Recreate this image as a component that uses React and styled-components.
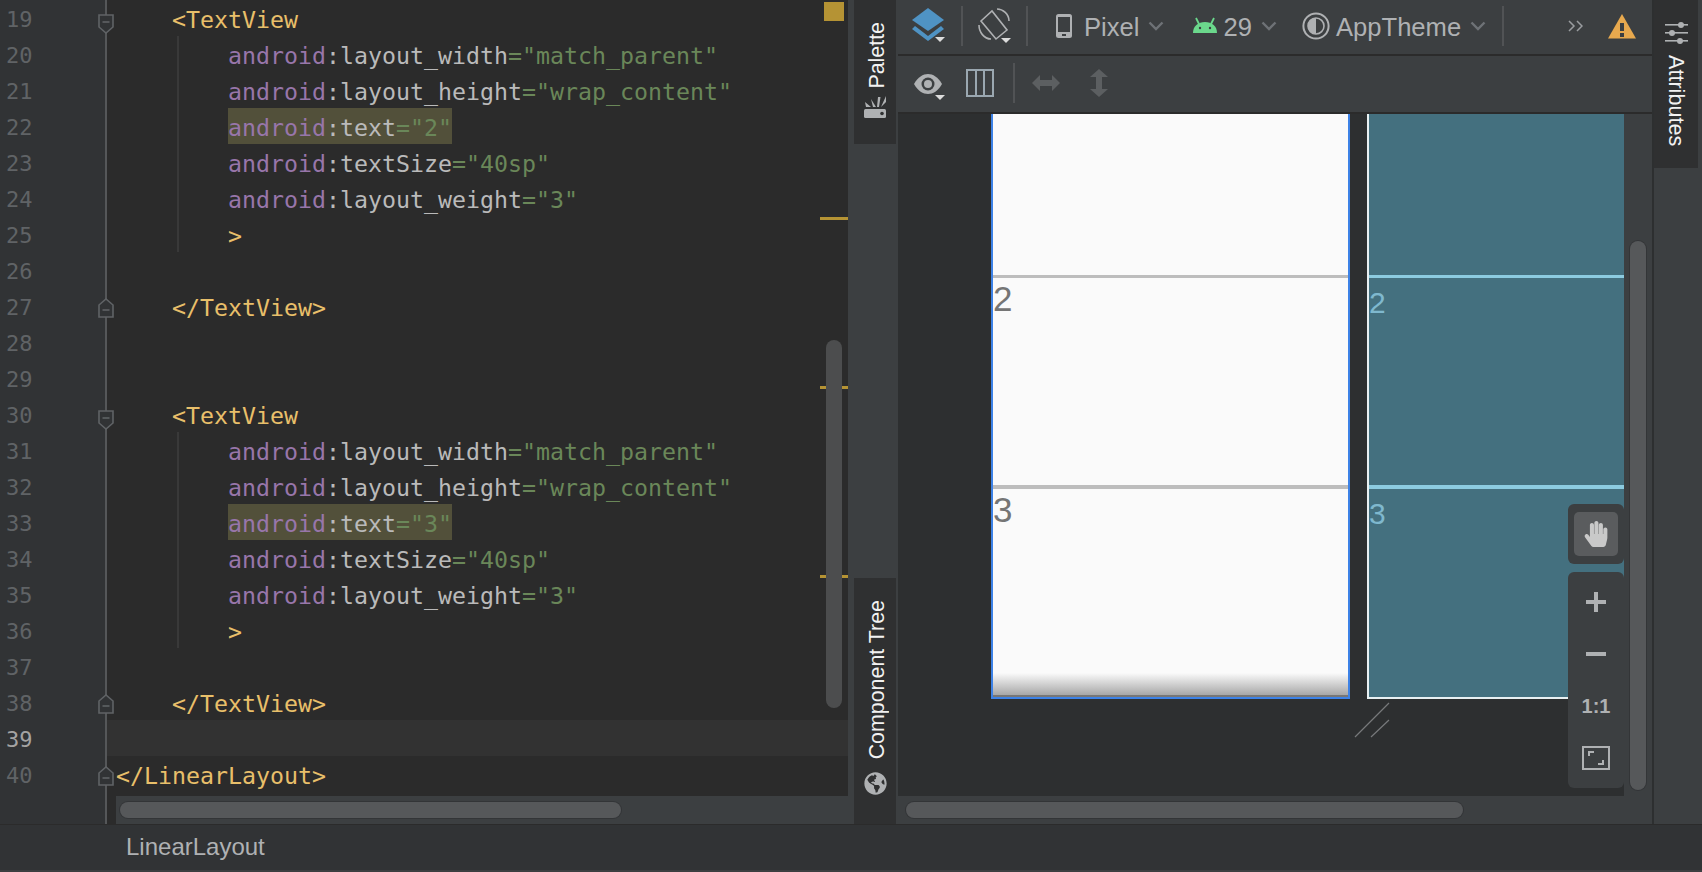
import React from 'react';
import styled, { createGlobalStyle } from 'styled-components';
import { FaGlobeAmericas, FaHandPaper } from 'react-icons/fa';

const GlobalStyle = createGlobalStyle`
  html, body { margin: 0; padding: 0; background: #3c3f41; overflow: hidden; }
  * { box-sizing: border-box; }
`;

const attrLine = (name, value) => ({ ns: 'android', name, value });

const blockLines = (start, digit) => [
  { n: start, indent: 1, tag: '<TextView', fold: 'open' },
  { n: start + 1, guide: true, ...attrLine('layout_width', 'match_parent') },
  { n: start + 2, guide: true, ...attrLine('layout_height', 'wrap_content') },
  { n: start + 3, guide: true, mark: true, ...attrLine('text', digit) },
  { n: start + 4, guide: true, ...attrLine('textSize', '40sp') },
  { n: start + 5, guide: true, ...attrLine('layout_weight', '3') },
  { n: start + 6, guide: true, indent: 2, tag: '>' },
  { n: start + 7 },
  { n: start + 8, indent: 1, tag: '</TextView>', fold: 'close' },
];

const lines = [
  ...blockLines(19, '2'),
  { n: 28 },
  { n: 29 },
  ...blockLines(30, '3'),
  { n: 39, current: true },
  { n: 40, indent: 0, tag: '</LinearLayout>', fold: 'close' },
];

const stripes = [217, 386, 575];

const FoldIcon = ({ kind }) => (
  <FoldMarker $kind={kind} width="16" height="20" viewBox="0 0 16 20">
    <path
      d={kind === 'open' ? 'M1 1H15V13L8 19L1 13Z' : 'M1 19H15V7L8 1L1 7Z'}
      fill="#313335"
      stroke="#606366"
      strokeWidth="1.6"
    />
    <path d={kind === 'open' ? 'M4.5 8H11.5' : 'M4.5 12H11.5'} stroke="#606366" strokeWidth="1.6" />
  </FoldMarker>
);

const Chevron = () => (
  <ChevronBox width="16" height="10" viewBox="0 0 16 10">
    <path d="M1.5 1.5L8 8L14.5 1.5" fill="none" stroke="#6e7276" strokeWidth="2.4" />
  </ChevronBox>
);

const LayersIcon = () => (
  <svg width="38" height="36" viewBox="0 0 38 36">
    <path d="M16 0L32 12L16 23L0 12Z" fill="#4f93c4" />
    <path d="M3 18L16 28L29 18L32 21L16 33L0 21Z" fill="#4f93c4" />
    <path d="M23 29H33L28 34Z" fill="#dcdcdc" />
  </svg>
);

const RotateIcon = () => (
  <svg width="36" height="36" viewBox="0 0 36 36" fill="none" stroke="#afb1b3" strokeWidth="1.6">
    <path d="M3 13L14 3L29 22L18 31Z" />
    <path d="M19 1C25 1 31 6 31 13" />
    <path d="M1 17C1 24 6 31 13 31" />
    <path d="M23 30H33L28 35Z" fill="#dcdcdc" stroke="none" />
  </svg>
);

const PhoneIcon = () => (
  <svg width="16" height="24" viewBox="0 0 16 24">
    <rect width="16" height="24" rx="2.5" fill="#afb1b3" />
    <rect x="2" y="3" width="12" height="15" fill="#3c3f41" />
    <rect x="6" y="20" width="4" height="2" fill="#3c3f41" />
  </svg>
);

const AndroidIcon = () => (
  <svg width="24" height="18" viewBox="0 0 24 18">
    <path d="M0 16C0 9 5 5 12 5C19 5 24 9 24 16Z" fill="#6bd88c" />
    <path d="M6 7L3 1M18 7L21 1" stroke="#6bd88c" strokeWidth="1.8" />
    <circle cx="7" cy="11" r="1.2" fill="#3c3f41" />
    <circle cx="17" cy="11" r="1.2" fill="#3c3f41" />
  </svg>
);

const ThemeIcon = () => (
  <svg width="28" height="28" viewBox="0 0 28 28">
    <circle cx="14" cy="14" r="12.6" fill="none" stroke="#afb1b3" strokeWidth="2" />
    <circle cx="14" cy="14" r="8" fill="none" stroke="#afb1b3" strokeWidth="1.6" />
    <path d="M14 6A8 8 0 0 0 14 22Z" fill="#afb1b3" />
  </svg>
);

const OverflowIcon = () => (
  <svg width="15" height="12" viewBox="0 0 15 12" fill="none" stroke="#9a9da0" strokeWidth="1.5">
    <path d="M1 1L6 6L1 11M9 1L14 6L9 11" />
  </svg>
);

const WarningIcon = () => (
  <svg width="28" height="25" viewBox="0 0 28 25">
    <path d="M14 0L28 24.5H0Z" fill="#e8a94e" />
    <rect x="12" y="9" width="4" height="8" fill="#3c3f41" />
    <rect x="12" y="19" width="4" height="4" fill="#3c3f41" />
  </svg>
);

const EyeIcon = () => (
  <svg width="32" height="34" viewBox="0 -5 32 34">
    <path d="M0 13C4 6 9 3 14 3C19 3 24 6 28 13C24 20 19 23 14 23C9 23 4 20 0 13Z" fill="#afb1b3" />
    <circle cx="14" cy="13" r="6.5" fill="#3c3f41" />
    <circle cx="14" cy="13" r="4" fill="#afb1b3" />
    <path d="M21 24H31L26 29Z" fill="#dcdcdc" />
  </svg>
);

const ColumnsIcon = () => (
  <svg width="28" height="28" viewBox="0 0 28 28" fill="none" stroke="#9aa7b0" strokeWidth="2">
    <rect x="1" y="1" width="26" height="26" />
    <path d="M10 1V27M18 1V27" />
  </svg>
);

const HorizontalArrows = () => (
  <svg width="28" height="16" viewBox="0 0 28 16">
    <path d="M0 8L8 0V5H20V0L28 8L20 16V11H8V16Z" fill="#5c5f61" />
  </svg>
);

const VerticalArrows = () => (
  <svg width="18" height="28" viewBox="0 0 18 28">
    <path d="M9 0L18 8H12V20H18L9 28L0 20H6V8H0Z" fill="#5c5f61" />
  </svg>
);

const PaletteIcon = () => (
  <svg width="22" height="22" viewBox="0 0 22 22">
    <rect y="13" width="22" height="9" rx="1.5" fill="#afb1b3" />
    <circle cx="18" cy="17.5" r="1.8" fill="#2f3031" />
    <path d="M1 6L7 11H2ZM7 3L12 11H9ZM14 1H16.5L15 11H13ZM22 0V6L17 11Z" fill="#afb1b3" />
  </svg>
);

const SlidersIcon = () => (
  <svg width="23" height="22" viewBox="0 0 23 22" fill="#afb1b3">
    <rect y="2" width="23" height="1.6" />
    <rect y="10" width="23" height="1.6" />
    <rect y="18" width="23" height="1.6" />
    <circle cx="16" cy="3" r="3" />
    <circle cx="7" cy="11" r="3" />
    <circle cx="15" cy="19" r="3" />
  </svg>
);

const ResizeHandle = () => (
  <HandleSvg width="36" height="36" viewBox="0 0 36 36" fill="none" stroke="#77797b" strokeWidth="1.2">
    <path d="M1 35L35 1M17 35L35 18" />
  </HandleSvg>
);

const FitIcon = () => (
  <svg width="28" height="24" viewBox="0 0 28 24" fill="none" stroke="#afb1b3">
    <rect x="1" y="1" width="26" height="22" strokeWidth="2" />
    <path d="M7 10V6H12M21 14V18H16" strokeWidth="2" />
  </svg>
);

const CodeLine = ({ line }) => (
  <Row $current={line.current} $guide={line.guide}>
    {line.tag && <Tag $indent={line.indent}>{line.tag}</Tag>}
    {line.ns && (
      <Attribute $mark={line.mark}>
        <Ns>{line.ns}</Ns>:{line.name}<Val>="{line.value}"</Val>
      </Attribute>
    )}
  </Row>
);

const ScreenPreview = () => (
  <Screen>
    <Cell $height={161} />
    <Cell $height={210} $thick={3}><Digit>2</Digit></Cell>
    <Cell $height={212} $thick={4}><Digit>3</Digit></Cell>
    <Shade />
  </Screen>
);

const BlueprintPreview = () => (
  <Blueprint>
    <BlueCell $height={161} />
    <BlueCell $height={210} $thick={3}><BlueDigit>2</BlueDigit></BlueCell>
    <BlueCell $height={212} $thick={4}><BlueDigit>3</BlueDigit></BlueCell>
  </Blueprint>
);

export default function App() {
  return (
    <>
      <GlobalStyle />
      <Page>
        <Workspace>
          <Editor>
            <Gutter>
              {lines.map((l) => (
                <GutterRow key={l.n}>
                  <LineNumber $current={l.current}>{l.n}</LineNumber>
                  {l.fold && <FoldIcon kind={l.fold} />}
                </GutterRow>
              ))}
            </Gutter>
            <CodePane>
              <CodeArea>
                {lines.map((l) => <CodeLine key={l.n} line={l} />)}
                <ErrorSquare />
                {stripes.map((y) => <Stripe key={y} style={{ top: y }} />)}
                <EditorThumb />
              </CodeArea>
              <EditorTrack><ScrollThumb $width={501} /></EditorTrack>
            </CodePane>
          </Editor>

          <SideStrip>
            <SideTab $height={144} $gap={7}>
              <RotatedLabel>Palette</RotatedLabel>
              <PaletteIcon />
            </SideTab>
            <SideTab $height={246} $gap={13}>
              <RotatedLabel>Component Tree</RotatedLabel>
              <FaGlobeAmericas size={23} color="#afb1b3" />
            </SideTab>
          </SideStrip>

          <Designer>
            <Toolbar $height={56}>
              <ToolSlot $ml={14}><LayersIcon /></ToolSlot>
              <Divider $ml={11} />
              <ToolSlot $ml={15}><RotateIcon /></ToolSlot>
              <Divider $ml={12} />
              <ToolSlot $ml={28}><PhoneIcon /></ToolSlot>
              <ToolText $ml={12}>Pixel</ToolText>
              <Chevron />
              <ToolSlot $ml={29}><AndroidIcon /></ToolSlot>
              <ToolText $ml={6}>29</ToolText>
              <Chevron />
              <ToolSlot $ml={25}><ThemeIcon /></ToolSlot>
              <ToolText $ml={6}>AppTheme</ToolText>
              <Chevron />
              <Divider $ml={16} />
              <ToolSlot $ml={64}><OverflowIcon /></ToolSlot>
              <ToolSlot $ml={25}><WarningIcon /></ToolSlot>
            </Toolbar>
            <Toolbar $height={58}>
              <ToolSlot $ml={16}><EyeIcon /></ToolSlot>
              <ToolSlot $ml={20}><ColumnsIcon /></ToolSlot>
              <Divider $ml={19} />
              <ToolSlot $ml={17}><HorizontalArrows /></ToolSlot>
              <ToolSlot $ml={30}><VerticalArrows /></ToolSlot>
            </Toolbar>
            <DesignBody>
              <Surface>
                <ScreenPreview />
                <BlueprintPreview />
                <ResizeHandle />
                <HandPanel>
                  <HandButton><FaHandPaper size={26} color="#c9c9c9" /></HandButton>
                </HandPanel>
                <ZoomPanel>
                  <ZoomSign>
                    <svg width="20" height="20" viewBox="0 0 20 20"><path d="M8 0H12V8H20V12H12V20H8V12H0V8H8Z" fill="#afb1b3" /></svg>
                  </ZoomSign>
                  <ZoomSign>
                    <svg width="20" height="4" viewBox="0 0 20 4"><rect width="20" height="4" fill="#afb1b3" /></svg>
                  </ZoomSign>
                  <ZoomSign><ActualSize>1:1</ActualSize></ZoomSign>
                  <ZoomSign><FitIcon /></ZoomSign>
                </ZoomPanel>
              </Surface>
              <SurfaceTrack><VerticalThumb /></SurfaceTrack>
            </DesignBody>
            <SurfaceBottomTrack><ScrollThumb $width={557} /></SurfaceBottomTrack>
          </Designer>

          <RightStrip>
            <AttributesTab>
              <SlidersIcon />
              <UprightLabel>Attributes</UprightLabel>
            </AttributesTab>
          </RightStrip>
        </Workspace>
        <StatusBar>LinearLayout</StatusBar>
      </Page>
    </>
  );
}

const Page = styled.div`
  width: 1702px;
  height: 872px;
  display: flex;
  flex-direction: column;
  overflow: hidden;
  font-family: "Liberation Sans", Arial, sans-serif;
`;

const Workspace = styled.div`
  display: flex;
  height: 824px;
`;

const Editor = styled.div`
  display: flex;
  width: 848px;
  background: #2b2b2b;
`;

const Gutter = styled.div`
  width: 107px;
  background: #313335;
  border-right: 2px solid #555759;
`;

const GutterRow = styled.div`
  position: relative;
  height: 36px;
`;

const LineNumber = styled.span`
  display: block;
  padding-left: 6px;
  font: 22px/40px "DejaVu Sans Mono", monospace;
  color: ${(p) => (p.$current ? '#a4a3a3' : '#606366')};
`;

const FoldMarker = styled.svg`
  position: absolute;
  left: 98px;
  top: ${(p) => (p.$kind === 'open' ? '14px' : '10px')};
`;

const CodePane = styled.div`
  flex: 1;
  display: flex;
  flex-direction: column;
  min-width: 0;
`;

const CodeArea = styled.div`
  position: relative;
  flex: 1;
  overflow: hidden;
`;

const Row = styled.div`
  position: relative;
  height: 36px;
  padding-left: 9px;
  white-space: pre;
  font: 23.25px/40px "DejaVu Sans Mono", monospace;
  color: #bababa;
  background: ${(p) => (p.$current ? '#323232' : 'transparent')};
  ${(p) => p.$guide && `
    &::before {
      content: '';
      position: absolute;
      left: 70px;
      top: 0;
      bottom: 0;
      width: 2px;
      background: #393939;
    }
  `}
`;

const Tag = styled.span`
  color: #e8bf6a;
  margin-left: ${(p) => p.$indent * 56}px;
`;

const Attribute = styled.span`
  display: inline-block;
  height: 36px;
  margin-left: 112px;
  background: ${(p) => (p.$mark ? '#52503a' : 'transparent')};
`;

const Ns = styled.span`
  color: #9876aa;
`;

const Val = styled.span`
  color: #6a8759;
`;

const ErrorSquare = styled.div`
  position: absolute;
  left: 717px;
  top: 2px;
  width: 20px;
  height: 19px;
  background: #b59334;
`;

const Stripe = styled.div`
  position: absolute;
  left: 713px;
  width: 28px;
  height: 3px;
  background: #b59334;
`;

const EditorThumb = styled.div`
  position: absolute;
  left: 719px;
  top: 340px;
  width: 16px;
  height: 368px;
  border-radius: 8px;
  background: #4c4d4e;
`;

const EditorTrack = styled.div`
  height: 28px;
  margin-left: 9px;
  padding: 6px 4px;
  background: #3c3f41;
`;

const ScrollThumb = styled.div`
  width: ${(p) => p.$width}px;
  height: 16px;
  border-radius: 8px;
  background: #56585a;
  box-shadow: 0 0 0 1px #333537;
`;

const SideStrip = styled.div`
  width: 50px;
  padding: 0 2px 0 6px;
  display: flex;
  flex-direction: column;
  justify-content: space-between;
  background: #3c3f41;
`;

const SideTab = styled.div`
  height: ${(p) => p.$height}px;
  padding-top: 22px;
  display: flex;
  flex-direction: column;
  align-items: center;
  gap: ${(p) => p.$gap}px;
  background: #2f3031;
`;

const RotatedLabel = styled.span`
  position: relative;
  left: 2px;
  writing-mode: vertical-rl;
  transform: rotate(180deg);
  font-size: 21.4px;
  line-height: 22px;
  color: #f2f2f2;
`;

const Designer = styled.div`
  width: 754px;
  display: flex;
  flex-direction: column;
`;

const Toolbar = styled.div`
  height: ${(p) => p.$height}px;
  padding-bottom: 2px;
  display: flex;
  align-items: center;
  background: #3c3f41;
  border-bottom: 2px solid #2b2b2b;
`;

const ToolSlot = styled.div`
  display: flex;
  margin-left: ${(p) => p.$ml}px;
`;

const Divider = styled.div`
  width: 2px;
  height: 40px;
  margin-left: ${(p) => p.$ml}px;
  background: #515355;
`;

const ToolText = styled.span`
  margin-left: ${(p) => p.$ml}px;
  padding-top: 2px;
  font-size: 25.6px;
  color: #afb1b3;
`;

const ChevronBox = styled.svg`
  margin-left: 9px;
`;

const DesignBody = styled.div`
  display: flex;
  height: 682px;
`;

const Surface = styled.div`
  position: relative;
  width: 726px;
  padding-left: 93px;
  display: flex;
  gap: 17px;
  overflow: hidden;
  background: #2d2f30;
`;

const Screen = styled.div`
  position: relative;
  flex: none;
  width: 359px;
  height: 585px;
  overflow: hidden;
  background: #fafafa;
  border: solid #3d82e6;
  border-width: 0 2px 2px 2px;
`;

const Cell = styled.div`
  height: ${(p) => p.$height}px;
  border-top: ${(p) => p.$thick || 0}px solid #bdbdbd;
`;

const Digit = styled.div`
  padding-top: 1px;
  font-size: 35px;
  line-height: 40px;
  color: #757575;
`;

const Shade = styled.div`
  position: absolute;
  left: 0;
  right: 0;
  bottom: 0;
  height: 24px;
  background: linear-gradient(#fafafa, #a9a9a9 90%, #777 90%);
`;

const Blueprint = styled.div`
  flex: none;
  width: 359px;
  height: 585px;
  background: #44707f;
  border: solid #e8f0f2;
  border-width: 0 2px 2px 2px;
`;

const BlueCell = styled.div`
  height: ${(p) => p.$height}px;
  border-top: ${(p) => p.$thick || 0}px solid #8ccbe0;
`;

const BlueDigit = styled.div`
  padding-top: 8px;
  font-size: 30px;
  line-height: 34px;
  color: #7fb8ce;
`;

const HandleSvg = styled.svg`
  position: absolute;
  left: 456px;
  top: 588px;
`;

const HandPanel = styled.div`
  position: absolute;
  right: 0;
  top: 390px;
  width: 56px;
  height: 60px;
  padding: 8px 6px;
  border-radius: 6px;
  background: #3c3f41;
`;

const HandButton = styled.div`
  width: 44px;
  height: 44px;
  display: flex;
  align-items: center;
  justify-content: center;
  border-radius: 5px;
  background: #5a5c5e;
`;

const ZoomPanel = styled.div`
  position: absolute;
  right: 0;
  top: 458px;
  width: 56px;
  height: 216px;
  padding: 4px 0;
  display: flex;
  flex-direction: column;
  border-radius: 6px;
  background: #3c3f41;
`;

const ZoomSign = styled.div`
  flex: 1;
  display: flex;
  align-items: center;
  justify-content: center;
`;

const ActualSize = styled.span`
  font-size: 20px;
  font-weight: 700;
  color: #afb1b3;
`;

const SurfaceTrack = styled.div`
  width: 28px;
  padding: 127px 6px 6px;
  display: flex;
  background: #3c3f41;
`;

const VerticalThumb = styled.div`
  flex: 1;
  border-radius: 8px;
  background: #56585a;
  box-shadow: 0 0 0 1px #333537;
`;

const SurfaceBottomTrack = styled.div`
  height: 28px;
  padding: 6px 8px;
  background: #3c3f41;
`;

const RightStrip = styled.div`
  flex: 1;
  border-left: 2px solid #2d2f30;
  background: #3c3f41;
`;

const AttributesTab = styled.div`
  width: 44px;
  height: 168px;
  padding-top: 22px;
  display: flex;
  flex-direction: column;
  align-items: center;
  gap: 11px;
  background: #2f3031;
`;

const UprightLabel = styled.span`
  writing-mode: vertical-rl;
  font-size: 21.6px;
  line-height: 22px;
  color: #f2f2f2;
`;

const StatusBar = styled.div`
  height: 48px;
  padding-left: 126px;
  border-top: 1px solid #2b2b2b;
  border-bottom: 2px solid #3c3f41;
  font-size: 24px;
  line-height: 44px;
  color: #afb1b3;
  background: #313335;
`;
